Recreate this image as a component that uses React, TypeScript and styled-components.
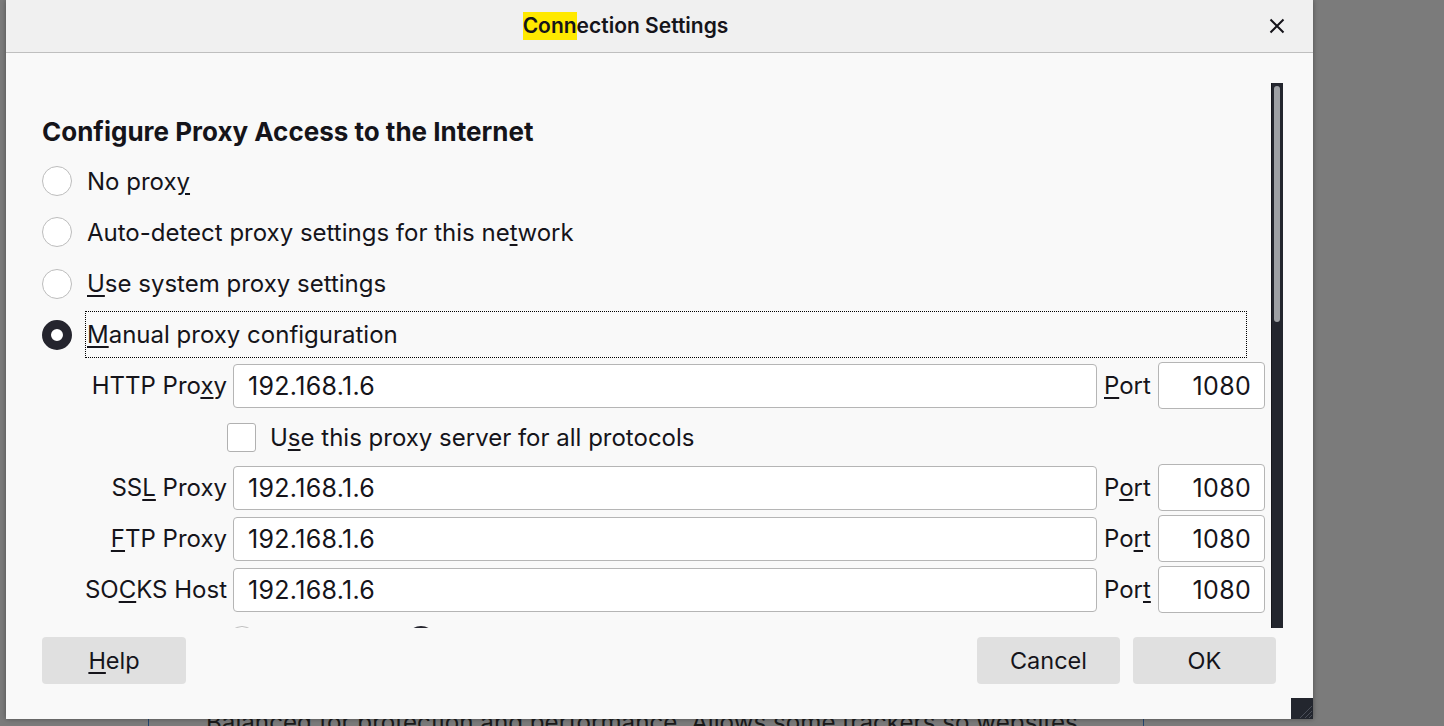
import React from "react";
import styled, { createGlobalStyle } from "styled-components";

const Global = createGlobalStyle`
  html, body { margin: 0; padding: 0; width: 1444px; height: 726px; overflow: hidden; background: #7b7b7b; }
  body { font-family: Inter, "Noto Sans", sans-serif; color: #15141a; }
  #root { width: 1444px; height: 726px; position: relative; }
  * { box-sizing: border-box; }
`;

const Backdrop = styled.div`
  height: 726px;
  display: flex;
  flex-direction: column;
  padding-top: 704px;
  padding-left: 148px;
`;

const TrackingCard = styled.div`
  width: 996px;
  height: 60px;
  border: 1px solid #24456f;
  border-radius: 4px;
  padding: 3px 0 0 57px;
  font-size: 24.2px;
  line-height: 30px;
  color: #1a1a1a;
  white-space: nowrap;
`;

const Dialog = styled.div`
  position: absolute;
  left: 6px;
  top: 0;
  width: 1307px;
  height: 719px;
  background: #f9f9f9;
  box-shadow: 0 0 5px rgba(0, 0, 0, 0.35);
  display: flex;
  flex-direction: column;
  overflow: hidden;
`;

const Header = styled.div`
  height: 53px;
  flex: none;
  display: flex;
  align-items: center;
  background: #f0f0f0;
  border-bottom: 1px solid #bfbfbf;
`;

const Title = styled.div`
  flex: 1;
  text-align: center;
  font-size: 21px;
  font-weight: 600;
`;

const Mark = styled.span`
  background: #ffe900;
  display: inline-block;
  line-height: 28px;
`;

const CloseButton = styled.div`
  width: 64px;
  height: 52px;
  margin-right: 4px;
  display: flex;
  align-items: center;
  justify-content: center;
`;

const Main = styled.div`
  height: 575px;
  flex: none;
  display: flex;
  padding-top: 30px;
`;

const Content = styled.div`
  flex: 1;
  overflow: hidden;
  padding: 0 6px 0 36px;
`;

const Scrollbar = styled.div`
  width: 12px;
  margin-right: 30px;
  background: #23262e;
  border-left: 1px solid #15171c;
  padding: 3px 3px 0 2px;
`;

const Thumb = styled.div`
  width: 6px;
  height: 236px;
  border-radius: 3px;
  background: #9da0a4;
`;

const Heading = styled.h1`
  margin: 31px 0 0;
  font-size: 26px;
  line-height: 36px;
  font-weight: 700;
`;

const RadioGroup = styled.div`
  display: flex;
  flex-direction: column;
  gap: 4.3px;
  margin-top: 7.5px;
`;

const RadioRow = styled.div`
  height: 47px;
  display: flex;
  align-items: center;
  gap: 13px;
`;

const RadioCircle = styled.span<{ $checked?: boolean }>`
  flex: none;
  width: 30px;
  height: 30px;
  border-radius: 50%;
  background: #fff;
  border: ${(p) => (p.$checked ? "9px solid #25252e" : "1px solid #bdbdbd")};
`;

const OptionLabel = styled.span<{ $focused?: boolean }>`
  height: 47px;
  display: flex;
  align-items: center;
  padding: 0 1px;
  font-size: 24px;
  border: 1px dotted ${(p) => (p.$focused ? "#000" : "transparent")};
  flex: ${(p) => (p.$focused ? "1" : "none")};
  margin-right: 18px;
`;

const Key = styled.u`
  text-decoration-thickness: 1.5px;
  text-underline-offset: 3px;
`;

const ProxyGrid = styled.div`
  display: grid;
  grid-template-columns: 185px 1fr 49px 107px;
  column-gap: 6px;
  row-gap: 4px;
  margin-top: 4px;
  grid-auto-rows: 47px;
`;

const FieldLabel = styled.span`
  align-self: center;
  text-align: right;
  font-size: 24px;
  white-space: nowrap;
`;

const PortLabel = styled.span`
  align-self: center;
  padding-left: 1px;
  font-size: 24px;
`;

const TextField = styled.input<{ $port?: boolean }>`
  align-self: center;
  width: 100%;
  height: ${(p) => (p.$port ? "47px" : "44px")};
  border: 1px solid #b5b5b5;
  border-radius: 4px;
  background: #fff;
  font-family: inherit;
  font-size: 25px;
  letter-spacing: 0.3px;
  color: #15141a;
  text-align: ${(p) => (p.$port ? "right" : "left")};
  padding: ${(p) => (p.$port ? "0 13px 0 0" : "0 0 0 14px")};
  outline: none;
`;

const WideRow = styled.div<{ $gap?: number }>`
  grid-column: 1 / -1;
  height: 48px;
  display: flex;
  align-items: center;
  padding-left: 185px;
  gap: ${(p) => p.$gap ?? 14}px;
  font-size: 24px;
`;

const CheckBox = styled.span`
  flex: none;
  width: 29px;
  height: 29px;
  border: 1px solid #b1b1b1;
  border-radius: 3px;
  background: #fff;
`;

const InlineOption = styled.span`
  display: flex;
  align-items: center;
  gap: 15px;
  margin-right: 16px;
`;

const Footer = styled.div`
  display: flex;
  gap: 13px;
  padding: 9px 37px 0 36px;
`;

const Button = styled.div<{ $w: number }>`
  width: ${(p) => p.$w}px;
  height: 47px;
  border-radius: 4px;
  background: #e0e0e0;
  display: flex;
  align-items: center;
  justify-content: center;
  font-size: 23.5px;
`;

const Spacer = styled.div`
  flex: 1;
`;

const Resizer = styled.div`
  position: absolute;
  right: 0;
  bottom: 0;
  width: 22px;
  height: 21px;
  background: #23262e;
`;

export default function App() {
  return (
    <>
      <Global />
      <Backdrop>
        <TrackingCard>Balanced for protection and performance. Allows some trackers so websites</TrackingCard>
      </Backdrop>
      <Dialog>
        <Header>
          <Title>
            <Mark>Conn</Mark>ection Settings
          </Title>
          <CloseButton>
            <svg width="16" height="16" viewBox="0 0 16 16">
              <path d="M1.5 1.5 L14.5 14.5 M14.5 1.5 L1.5 14.5" stroke="#15141a" strokeWidth="2" />
            </svg>
          </CloseButton>
        </Header>
        <Main>
          <Content>
            <Heading>Configure Proxy Access to the Internet</Heading>
            <RadioGroup>
              <RadioRow>
                <RadioCircle />
                <OptionLabel>No prox<Key>y</Key></OptionLabel>
              </RadioRow>
              <RadioRow>
                <RadioCircle />
                <OptionLabel>Auto-detect proxy settings for this ne<Key>t</Key>work</OptionLabel>
              </RadioRow>
              <RadioRow>
                <RadioCircle />
                <OptionLabel><Key>U</Key>se system proxy settings</OptionLabel>
              </RadioRow>
              <RadioRow>
                <RadioCircle $checked />
                <OptionLabel $focused><Key>M</Key>anual proxy configuration</OptionLabel>
              </RadioRow>
            </RadioGroup>
            <ProxyGrid>
              <FieldLabel>HTTP Pro<Key>x</Key>y</FieldLabel>
              <TextField readOnly defaultValue="192.168.1.6" />
              <PortLabel><Key>P</Key>ort</PortLabel>
              <TextField $port readOnly defaultValue="1080" />

              <WideRow>
                <CheckBox />
                <span>U<Key>s</Key>e this proxy server for all protocols</span>
              </WideRow>

              <FieldLabel>SS<Key>L</Key> Proxy</FieldLabel>
              <TextField readOnly defaultValue="192.168.1.6" />
              <PortLabel>P<Key>o</Key>rt</PortLabel>
              <TextField $port readOnly defaultValue="1080" />

              <FieldLabel><Key>F</Key>TP Proxy</FieldLabel>
              <TextField readOnly defaultValue="192.168.1.6" />
              <PortLabel>Po<Key>r</Key>t</PortLabel>
              <TextField $port readOnly defaultValue="1080" />

              <FieldLabel>SO<Key>C</Key>KS Host</FieldLabel>
              <TextField readOnly defaultValue="192.168.1.6" />
              <PortLabel>Por<Key>t</Key></PortLabel>
              <TextField $port readOnly defaultValue="1080" />

              <WideRow $gap={0}>
                <InlineOption>
                  <RadioCircle />
                  <span>SOC<Key>K</Key>S v4</span>
                </InlineOption>
                <InlineOption>
                  <RadioCircle $checked />
                  <span>SOCKS <Key>v</Key>5</span>
                </InlineOption>
              </WideRow>
            </ProxyGrid>
          </Content>
          <Scrollbar>
            <Thumb />
          </Scrollbar>
        </Main>
        <Footer>
          <Button $w={144}><span><Key>H</Key>elp</span></Button>
          <Spacer />
          <Button $w={143}>Cancel</Button>
          <Button $w={143}>OK</Button>
        </Footer>
        <Resizer>
          <svg width="22" height="21" viewBox="0 0 22 21">
            <path d="M21 8 L9 20 M21 13 L14 20 M21 17 L18 20" stroke="#4a4e58" strokeWidth="1" />
          </svg>
        </Resizer>
      </Dialog>
    </>
  );
}
